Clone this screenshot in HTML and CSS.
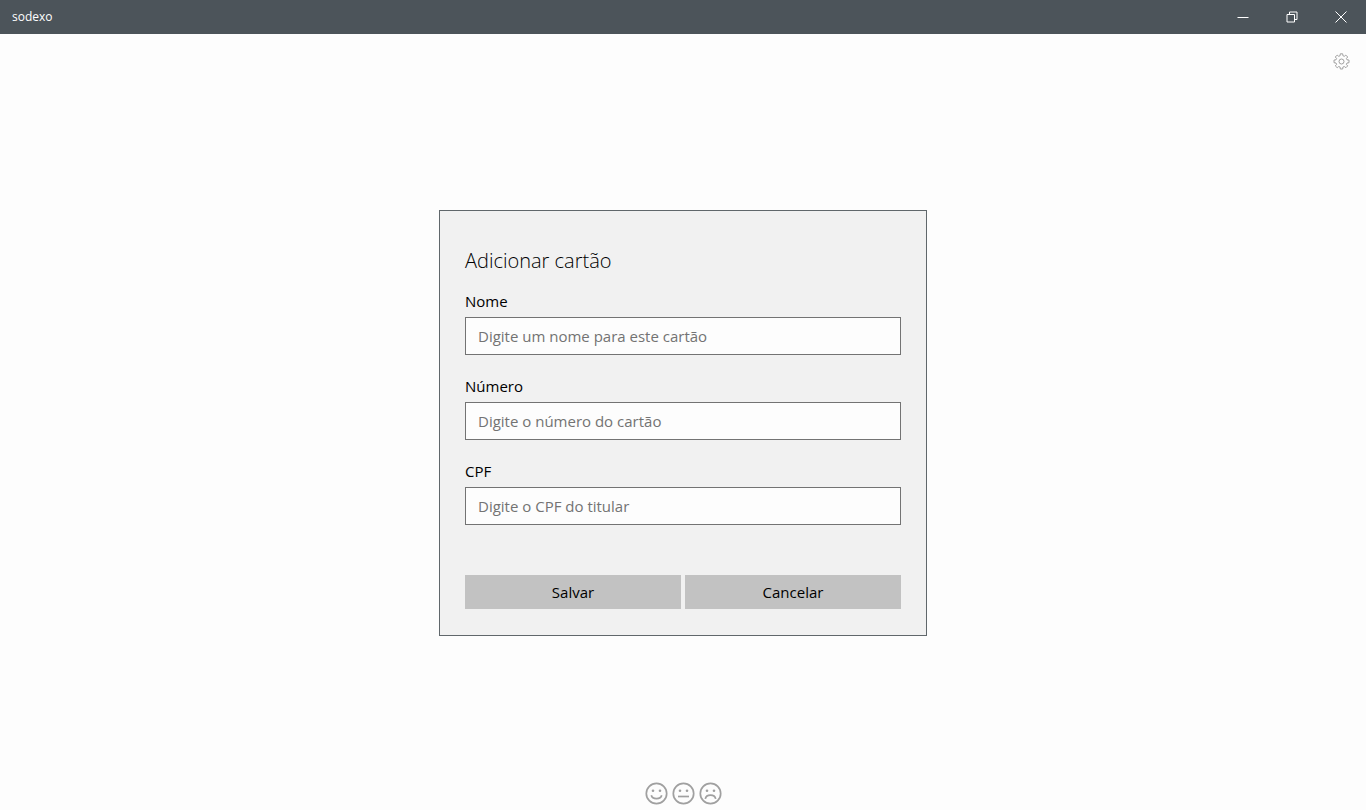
FILE: index.html
```html
<!DOCTYPE html>
<html lang="pt-BR">
<head>
  <meta charset="utf-8">
  <meta name="viewport" content="width=device-width, initial-scale=1">
  <title>sodexo</title>
  <link rel="stylesheet" href="styles.css">
</head>
<body>
  <header class="titlebar">
    <span class="app-name">sodexo</span>
    <div class="window-controls">
      <button type="button" aria-label="Minimizar">
        <svg width="12" height="12" viewBox="0 0 12 12"><path d="M0.5 6.5h11"/></svg>
      </button>
      <button type="button" aria-label="Restaurar">
        <svg width="12" height="12" viewBox="0 0 12 12"><path d="M1 3.5h7.5v7.5h-7.5zM3.5 3.5v-2.5h7.5v7.5h-2.5"/></svg>
      </button>
      <button type="button" aria-label="Fechar">
        <svg width="12" height="12" viewBox="0 0 12 12"><path d="M0.5 0.5l11 11M11.5 0.5l-11 11"/></svg>
      </button>
    </div>
  </header>

  <div class="toolbar">
    <button type="button" class="icon-button" aria-label="Configurações">
      <svg width="17" height="17" viewBox="0 0 17 17">
        <path d="M7.1 2.7 7.3.8h2.4l.2 1.9 1.4.6 1.5-1.2 1.9 1.9-1.3 1.5.6 1.3 2 .3v2.6l-2 .3-.6 1.4 1.3 1.5-1.8 1.8-1.6-1.2-1.4.6-.2 1.9H7.3l-.2-1.9-1.4-.6-1.5 1.2-1.9-1.8 1.3-1.5-.6-1.4-2-.3V7.1l2-.3.6-1.3L2.3 4l1.9-1.9 1.5 1.2z"/>
        <circle cx="8.5" cy="8.5" r="2.5"/>
      </svg>
    </button>
  </div>

  <main>
    <form class="card-form">
      <h1>Adicionar cartão</h1>
      <div class="field">
        <label for="nome">Nome</label>
        <input type="text" id="nome" placeholder="Digite um nome para este cartão">
      </div>
      <div class="field">
        <label for="numero">Número</label>
        <input type="text" id="numero" placeholder="Digite o número do cartão">
      </div>
      <div class="field">
        <label for="cpf">CPF</label>
        <input type="text" id="cpf" placeholder="Digite o CPF do titular">
      </div>
      <div class="actions">
        <button type="submit">Salvar</button>
        <button type="button">Cancelar</button>
      </div>
    </form>
  </main>

  <footer class="feedback">
    <button type="button" class="icon-button" aria-label="Gostei">
      <svg width="23" height="23" viewBox="0 0 23 23">
        <circle cx="11.5" cy="11.5" r="10.2"/>
        <path d="M6.3 13.2c1 4.5 9.4 4.5 10.4 0"/>
        <circle class="eye" cx="8" cy="8.7" r="1.3"/>
        <circle class="eye" cx="15" cy="8.7" r="1.3"/>
      </svg>
    </button>
    <button type="button" class="icon-button" aria-label="Indiferente">
      <svg width="23" height="23" viewBox="0 0 23 23">
        <circle cx="11.5" cy="11.5" r="10.2"/>
        <path d="M6 14.5h11"/>
        <circle class="eye" cx="8" cy="8.7" r="1.3"/>
        <circle class="eye" cx="15" cy="8.7" r="1.3"/>
      </svg>
    </button>
    <button type="button" class="icon-button" aria-label="Não gostei">
      <svg width="23" height="23" viewBox="0 0 23 23">
        <circle cx="11.5" cy="11.5" r="10.2"/>
        <path d="M6.3 16.8c1-5 9.4-5 10.4 0"/>
        <circle class="eye" cx="8" cy="8.7" r="1.3"/>
        <circle class="eye" cx="15" cy="8.7" r="1.3"/>
      </svg>
    </button>
  </footer>
</body>
</html>
```
FILE: styles.css
```css
* {
  box-sizing: border-box;
}

body {
  margin: 0;
  min-height: 100vh;
  display: flex;
  flex-direction: column;
  background-color: #fdfdfd;
  color: #000;
  font-family: "Segoe UI", "Open Sans", sans-serif;
  font-size: 15px;
}

button, input {
  font: inherit;
  color: inherit;
  border-radius: 0;
}

button {
  padding: 0;
  border: none;
  background: none;
}

svg {
  display: block;
  fill: none;
  stroke: currentColor;
}

/* title bar */
.titlebar {
  display: flex;
  justify-content: space-between;
  align-items: center;
  height: 34px;
  padding: 0 1px 0 12px;
  background-color: #4c545a;
  color: #fff;
}

.app-name {
  font-size: 12px;
  font-weight: 500;
  line-height: 16px;
}

.window-controls {
  display: flex;
}

.window-controls button {
  display: flex;
  align-items: center;
  justify-content: center;
  width: 49px;
  height: 34px;
}

.toolbar {
  display: flex;
  justify-content: flex-end;
  align-items: center;
  height: 54px;
  padding-right: 16px;
}

.icon-button {
  color: #a0a0a0;
}

/* form */
main {
  flex: 1;
  display: flex;
  align-items: center;
  justify-content: center;
}

.card-form {
  width: 100%;
  max-width: 488px;
  padding: 36px 25px 26px;
  background-color: #f1f1f1;
  border: 1px solid #60676b;
}

h1 {
  margin: 0 0 16px;
  font-size: 20px;
  font-weight: 300;
  line-height: 28px;
}

.field {
  margin-bottom: 21px;
}

.field label {
  display: block;
  margin-bottom: 6px;
  line-height: 20px;
}

.field input {
  display: block;
  width: 100%;
  height: 38px;
  padding: 0 12px;
  border: 1px solid #737373;
  background-color: #fdfdfd;
}

.field input::placeholder {
  color: #737373;
  opacity: 1;
}

.actions {
  display: grid;
  grid-template-columns: 1fr 1fr;
  gap: 4px;
  margin-top: 50px;
}

.actions button {
  height: 34px;
  background-color: #c2c2c2;
}

.actions button:hover {
  background-color: #b3b3b3;
}

/* feedback faces */
.feedback {
  display: flex;
  align-items: flex-end;
  justify-content: center;
  gap: 4px;
  height: 52px;
  padding-bottom: 5px;
}

.feedback svg {
  stroke-width: 1.7;
}

.feedback .eye {
  fill: currentColor;
  stroke: none;
}
```
